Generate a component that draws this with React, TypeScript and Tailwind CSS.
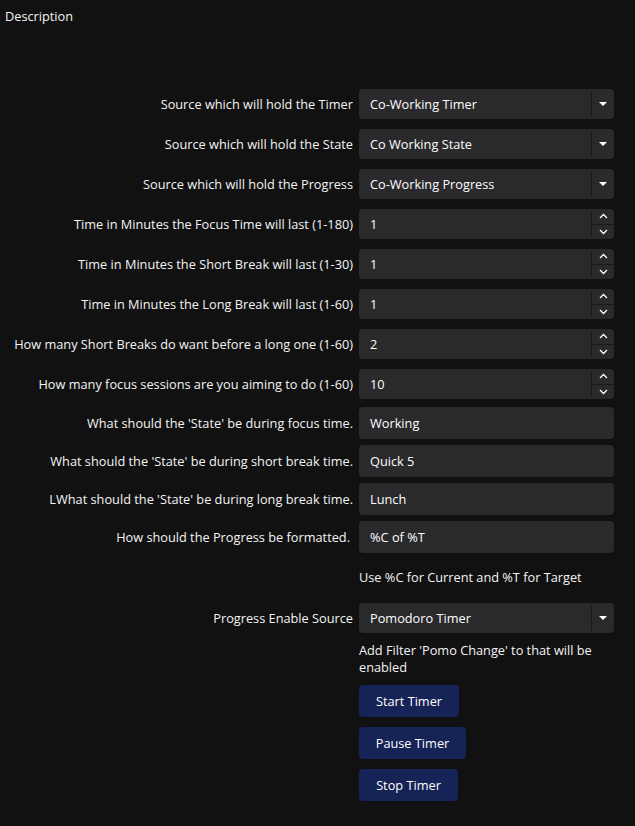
import React from "react";

const font = { fontFamily: '"Open Sans", "Noto Sans", sans-serif' };

function Arrow() {
  return (
    <svg width="10" height="6" viewBox="0 0 10 6" className="block">
      <path d="M1 1 L9 1 L5 5 Z" fill="#ffffff" />
    </svg>
  );
}

function Select({ value }: { value: string }) {
  return (
    <div className="flex h-[30px] w-[255px] items-stretch rounded-[4px] bg-[#2a2a2d]">
      <div className="flex flex-1 items-center pl-[11px] text-[#fefefe]">{value}</div>
      <div className="my-[2px] w-px bg-[#18181a]" />
      <div className="flex w-[22px] items-center justify-center">
        <Arrow />
      </div>
    </div>
  );
}

function Spin({ value }: { value: string }) {
  return (
    <div className="flex h-[30px] w-[255px] items-stretch rounded-[4px] bg-[#2a2a2d]">
      <div className="flex flex-1 items-center pl-[11px] text-[#fefefe]">{value}</div>
      <div className="my-[2px] w-px bg-[#18181a]" />
      <div className="flex w-[22px] flex-col">
        <div className="flex flex-1 items-center justify-center">
          <svg width="9" height="6" viewBox="0 0 9 6" className="block">
            <path d="M1 5 L4.5 1.5 L8 5" stroke="#ffffff" strokeWidth="1.3" fill="none" />
          </svg>
        </div>
        <div className="h-px bg-[#18181a]" />
        <div className="flex flex-1 items-center justify-center">
          <svg width="9" height="6" viewBox="0 0 9 6" className="block">
            <path d="M1 1 L4.5 4.5 L8 1" stroke="#ffffff" strokeWidth="1.3" fill="none" />
          </svg>
        </div>
      </div>
    </div>
  );
}

function TextBox({ value }: { value: string }) {
  return (
    <div className="flex h-[32px] w-[255px] items-center rounded-[4px] bg-[#2a2a2d] pl-[11px] text-[#fefefe]">
      {value}
    </div>
  );
}

function Row({ label, children, className, labelClass }: { label?: string; children: React.ReactNode; className?: string; labelClass?: string }) {
  return (
    <div className={"flex items-center " + (className ?? "")}>
      <div className={"w-[353px] shrink-0 text-right whitespace-nowrap " + (labelClass ?? "")}>{label}</div>
      <div className="ml-[6px]">{children}</div>
    </div>
  );
}

function Btn({ label, w }: { label: string; w: string }) {
  return (
    <div className={"flex h-[32px] items-center justify-center rounded-[4px] bg-[#162356] text-[#fefefe] " + w}>
      {label}
    </div>
  );
}

export default function App() {
  return (
    <div className="h-[826px] w-[635px] overflow-hidden bg-[#111111] text-[12.75px] leading-[17px] text-[#f4f4f4]" style={font}>
      <div className="pl-[5px] pt-[8px]">Description</div>
      <div className="mt-[64px] flex flex-col">
        <Row label="Source which will hold the Timer"><Select value="Co-Working Timer" /></Row>
        <Row label="Source which will hold the State" className="mt-[10px]"><Select value="Co Working State" /></Row>
        <Row label="Source which will hold the Progress" className="mt-[10px]"><Select value="Co-Working Progress" /></Row>
        <Row label="Time in Minutes the Focus Time will last (1-180)" className="mt-[10px]"><Spin value="1" /></Row>
        <Row label="Time in Minutes the Short Break will last (1-30)" className="mt-[10px]"><Spin value="1" /></Row>
        <Row label="Time in Minutes the Long Break will last (1-60)" className="mt-[10px]"><Spin value="1" /></Row>
        <Row label="How many Short Breaks do want before a long one (1-60)" className="mt-[10px]"><Spin value="2" /></Row>
        <Row label="How many focus sessions are you aiming to do (1-60)" className="mt-[10px]"><Spin value="10" /></Row>
        <Row label="What should the 'State' be during focus time." className="mt-[8px]"><TextBox value="Working" /></Row>
        <Row label="What should the 'State' be during short break time." className="mt-[6px]"><TextBox value="Quick 5" /></Row>
        <Row label="LWhat should the 'State' be during long break time." className="mt-[6px]"><TextBox value="Lunch" /></Row>
        <Row label="How should the Progress be formatted." className="mt-[6px]" labelClass="pr-[3px]"><TextBox value="%C of %T" /></Row>
        <Row className="mt-[16px]"><div className="w-[255px]">Use %C for Current and %T for Target</div></Row>
        <Row label="Progress Enable Source" className="mt-[17px]"><Select value="Pomodoro Timer" /></Row>
        <Row className="mt-[9px]">
          <div className="w-[255px]">Add Filter 'Pomo Change' to that will be enabled</div>
        </Row>
        <Row className="mt-[9px]"><Btn label="Start Timer" w="w-[100px]" /></Row>
        <Row className="mt-[10px]"><Btn label="Pause Timer" w="w-[107px]" /></Row>
        <Row className="mt-[10px]"><Btn label="Stop Timer" w="w-[99px]" /></Row>
      </div>
    </div>
  );
}
